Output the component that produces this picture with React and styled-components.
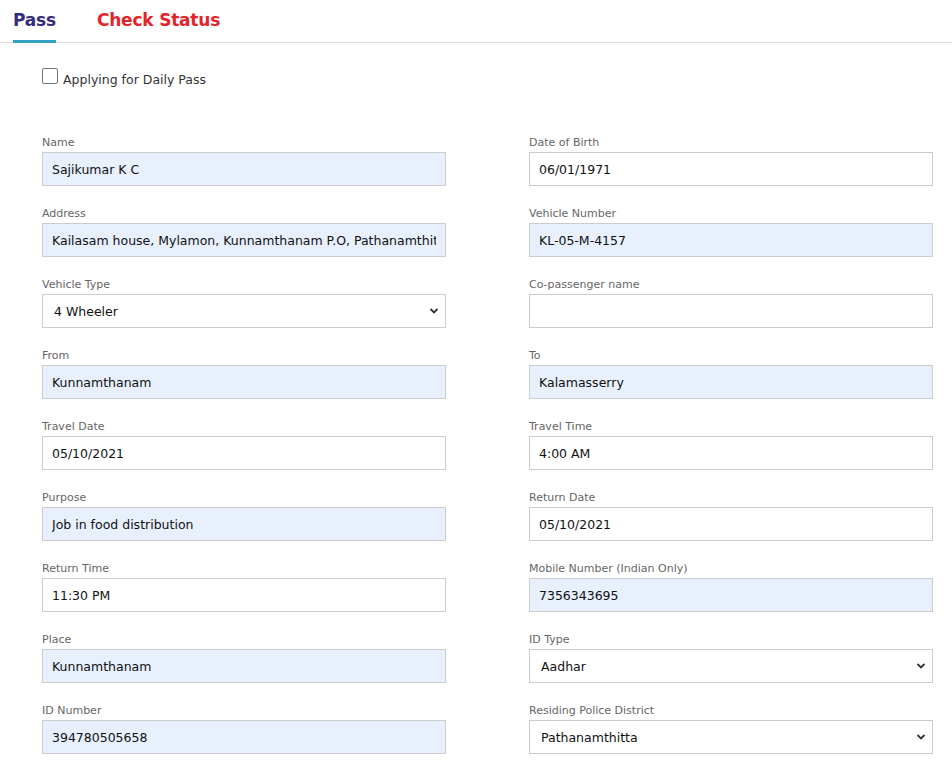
import React from "react";
import styled, { createGlobalStyle } from "styled-components";

const Global = createGlobalStyle`
  html, body { margin: 0; padding: 0; background: #fff; }
  body { font-family: "DejaVu Sans", Verdana, sans-serif; color: #222; }
  * { box-sizing: border-box; }
`;

const Page = styled.div`
  width: 952px;
  min-height: 779px;
  overflow: hidden;
`;

const TabBar = styled.div`
  display: flex;
  align-items: flex-end;
  height: 43px;
  border-bottom: 1px solid #dcdcdc;
  padding-left: 13px;
  gap: 41px;
`;

const Tab = styled.div`
  font-family: "DejaVu Sans", Verdana, sans-serif;
  font-weight: bold;
  font-size: 17px;
  letter-spacing: -0.2px;
  color: ${(p) => (p.$active ? "#352c7e" : "#e3242b")};
  padding-bottom: 9px;
  margin-bottom: -1px;
  border-bottom: 3px solid ${(p) => (p.$active ? "#35a0c6" : "transparent")};
  line-height: 21px;
`;

const Content = styled.div`
  padding: 25px 19px 0 42px;
`;

const CheckRow = styled.label`
  display: flex;
  align-items: flex-start;
  gap: 5px;
  font-size: 12.5px;
  line-height: 16px;
  color: #333;
`;

const Box = styled.span`
  width: 16px;
  height: 16px;
  border: 1px solid #767676;
  border-radius: 2px;
  background: #fff;
`;

const CheckText = styled.span`
  padding-top: 4px;
`;

const Grid = styled.div`
  display: grid;
  grid-template-columns: 404px 404px;
  column-gap: 83px;
  row-gap: 20px;
  margin-top: 47px;
`;

const Field = styled.div`
  display: flex;
  flex-direction: column;
`;

const Label = styled.div`
  font-size: 11px;
  line-height: 15px;
  color: #666;
  margin-bottom: 2px;
`;

const Input = styled.input`
  width: 100%;
  height: 34px;
  border: 1px solid #cccccc;
  border-radius: 0;
  padding: 0 9px;
  font-family: "DejaVu Sans", Verdana, sans-serif;
  font-size: 12.5px;
  color: #111;
  background: ${(p) => (p.$filled ? "#e8f0fe" : "#fff")};
  outline: none;
`;

const SelectWrap = styled.div`
  position: relative;
  width: 100%;
`;

const Select = styled.select`
  appearance: none;
  -webkit-appearance: none;
  width: 100%;
  height: 34px;
  border: 1px solid #cccccc;
  border-radius: 0;
  padding: 0 11px;
  font-family: "DejaVu Sans", Verdana, sans-serif;
  font-size: 12.5px;
  color: #111;
  background: #fff;
  outline: none;
`;

const Chevron = styled.svg`
  position: absolute;
  right: 7px;
  top: 13px;
  width: 10px;
  height: 8px;
  pointer-events: none;
`;

const fields = [
  { label: "Name", value: "Sajikumar K C", filled: true },
  { label: "Date of Birth", value: "06/01/1971" },
  { label: "Address", value: "Kailasam house, Mylamon, Kunnamthanam P.O, Pathanamthitta", filled: true },
  { label: "Vehicle Number", value: "KL-05-M-4157", filled: true },
  { label: "Vehicle Type", value: "4 Wheeler", select: true },
  { label: "Co-passenger name", value: "" },
  { label: "From", value: "Kunnamthanam", filled: true },
  { label: "To", value: "Kalamasserry", filled: true },
  { label: "Travel Date", value: "05/10/2021" },
  { label: "Travel Time", value: "4:00 AM" },
  { label: "Purpose", value: "Job in food distribution", filled: true },
  { label: "Return Date", value: "05/10/2021" },
  { label: "Return Time", value: "11:30 PM" },
  { label: "Mobile Number (Indian Only)", value: "7356343695", filled: true },
  { label: "Place", value: "Kunnamthanam", filled: true },
  { label: "ID Type", value: "Aadhar", select: true },
  { label: "ID Number", value: "394780505658", filled: true },
  { label: "Residing Police District", value: "Pathanamthitta", select: true },
];

export default function App() {
  return (
    <Page>
      <Global />
      <TabBar>
        <Tab $active>Pass</Tab>
        <Tab>Check Status</Tab>
      </TabBar>
      <Content>
        <CheckRow>
          <Box />
          <CheckText>Applying for Daily Pass</CheckText>
        </CheckRow>
        <Grid>
          {fields.map((f) => (
            <Field key={f.label}>
              <Label>{f.label}</Label>
              {f.select ? (
                <SelectWrap>
                  <Select value={f.value} onChange={() => {}}>
                    <option>{f.value}</option>
                  </Select>
                  <Chevron viewBox="0 0 10 8">
                    <path d="M1.5 2 L5 5.5 L8.5 2" fill="none" stroke="#333" strokeWidth="1.8" />
                  </Chevron>
                </SelectWrap>
              ) : (
                <Input $filled={f.filled} value={f.value} readOnly />
              )}
            </Field>
          ))}
        </Grid>
      </Content>
    </Page>
  );
}
